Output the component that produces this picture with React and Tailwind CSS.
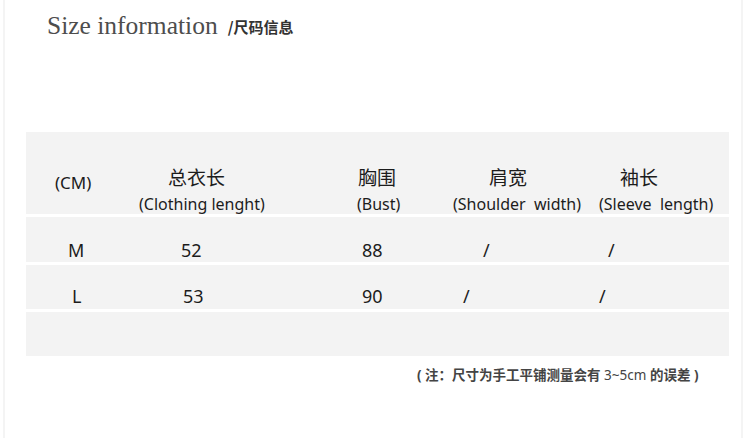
import React from 'react'

// Tableau des tailles — reproduction de la fiche produit
const FONT = { fontFamily: '"Noto Sans", "Noto Sans CJK SC", sans-serif' }

const headers = [
  { w: 'w-[109px]', single: '(CM)', singleMl: 'ml-[29px]' },
  { w: 'w-[195px]', zh: '总衣长', zhMl: 'ml-[33px]', en: '(Clothing lenght)', enMl: 'ml-[4px]' },
  { w: 'w-[110px]', zh: '胸围', zhMl: 'ml-[28px]', en: '(Bust)', enMl: 'ml-[27px]' },
  { w: 'w-[150px]', zh: '肩宽', zhMl: 'ml-[49px]', en: '(Shoulder  width)', enMl: 'ml-[13px]' },
  { w: 'w-[139px]', zh: '袖长', zhMl: 'ml-[30px]', en: '(Sleeve  length)', enMl: 'ml-[9px]' },
]

const widths = ['w-[109px]', 'w-[195px]', 'w-[110px]', 'w-[150px]', 'w-[139px]']

const rows = [
  {
    h: 'h-[45px] pt-[21px]',
    cells: [
      { t: 'M', ml: 'ml-[42px]' },
      { t: '52', ml: 'ml-[46px]' },
      { t: '88', ml: 'ml-[32px]' },
      { t: '/', ml: 'ml-[43px]' },
      { t: '/', ml: 'ml-[18px]' },
    ],
  },
  {
    h: 'h-[44px] pt-[19px]',
    cells: [
      { t: 'L', ml: 'ml-[46px]' },
      { t: '53', ml: 'ml-[48px]' },
      { t: '90', ml: 'ml-[32px]' },
      { t: '/', ml: 'ml-[23px]' },
      { t: '/', ml: 'ml-[9px]' },
    ],
  },
]

export default function App() {
  return (
    <div className="w-[750px] h-[438px] bg-white overflow-hidden">
      <div className="ml-[3px] mr-[7px] h-full border-l-2 border-r-2 border-[#f4f4f4]">
        {/* ── Titre ───────────────────────────── */}
        <div className="h-[132px] pt-[9px] pl-[42px] flex items-start">
          <span
            className="text-[25.5px] leading-[34px] text-[#4d4d4d]"
            style={{ fontFamily: '"Liberation Serif", serif' }}
          >
            Size information
          </span>
          <span
            className="ml-[10px] mt-[8px] text-[15px] leading-[20px] font-bold text-[#333]"
            style={{ fontFamily: '"Noto Sans CJK SC", sans-serif' }}
          >
            /尺码信息
          </span>
        </div>

        {/* ── Tableau ─────────────────────────── */}
        <div className="ml-[21px] w-[703px] flex flex-col gap-[3px] text-[#1c1c1c]" style={FONT}>
          <div className="h-[82px] bg-[#f3f3f3] flex">
            {headers.map((c, i) => (
              <div key={i} className={`${c.w} flex flex-col`}>
                {c.single ? (
                  <div className={`${c.singleMl} pt-[41px] text-[17px] leading-[20px]`}>{c.single}</div>
                ) : (
                  <>
                    <div className={`${c.zhMl} pt-[34px] text-[19px] leading-[24px]`}>{c.zh}</div>
                    <div className={`${c.enMl} mt-[4px] text-[16px] leading-[20px] whitespace-pre`}>{c.en}</div>
                  </>
                )}
              </div>
            ))}
          </div>

          {rows.map((r, ri) => (
            <div key={ri} className={`${r.h} bg-[#f3f3f3] flex`}>
              {r.cells.map((c, i) => (
                <div key={i} className={widths[i]}>
                  <span className={`${c.ml} inline-block text-[18px] leading-[24px]`}>{c.t}</span>
                </div>
              ))}
            </div>
          ))}

          <div className="h-[44px] bg-[#f3f3f3]" />
        </div>

        {/* ── Note ────────────────────────────── */}
        <div
          className="mt-[10px] ml-[412px] text-[13.5px] leading-[18px] font-bold text-[#444] whitespace-pre"
          style={FONT}
        >
          ( 注：尺寸为手工平铺测量会有 <span className="font-normal">3~5cm</span> 的误差 )
        </div>
      </div>
    </div>
  )
}
